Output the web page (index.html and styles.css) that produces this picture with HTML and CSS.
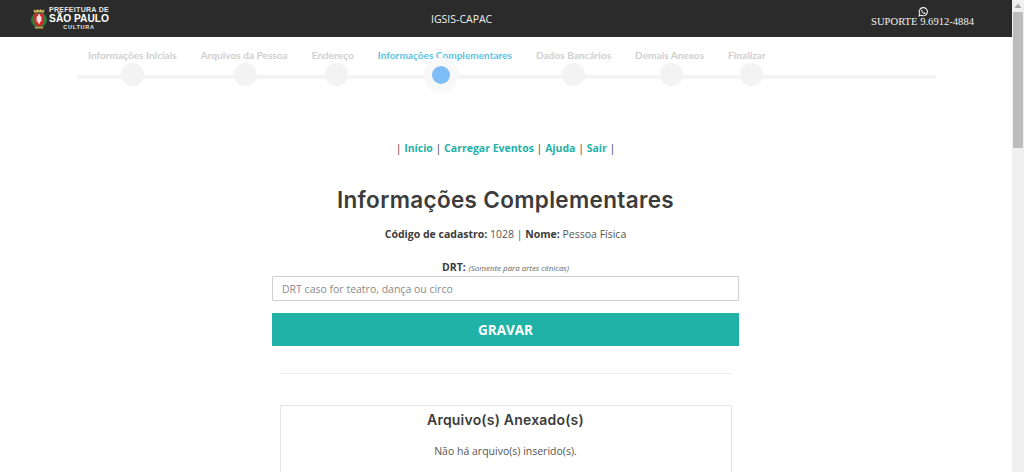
FILE: index.html
```html
<!DOCTYPE html>
<html lang="pt-BR">
<head>
<meta charset="utf-8">
<title>IGSIS-CAPAC</title>
<link rel="stylesheet" href="styles.css">
</head>
<body>
<div class="page">
  <div class="main">
    <header class="topbar">
      <div class="logo">
        <svg class="crest" width="16" height="21" viewBox="0 0 17 23" preserveAspectRatio="none">
          <path d="M3 5 L3 1.500 L5 3 L7 1 L8.500 3 L10 1 L12 3 L14 1.500 L14 5 Z" fill="#d8b65a"/>
          <ellipse cx="8.500" cy="13" rx="8.500" ry="8.500" fill="#2c7a3c"/>
          <path d="M3.500 6 H13.500 V14 Q13.500 19 8.500 20.500 Q3.500 19 3.500 14 Z" fill="#d62a2a"/>
          <rect x="6" y="9" width="5" height="6" fill="#f2e6e0"/>
          <rect x="7.500" y="7" width="2" height="10" fill="#f2e6e0"/>
          <rect x="4" y="20.500" width="9" height="2" fill="#b9a04c"/>
        </svg>
        <div class="logo-text">
          <span class="logo-top">PREFEITURA DE</span>
          <span class="logo-main">SÃO PAULO</span>
          <span class="logo-sub">CULTURA</span>
        </div>
      </div>
      <div class="app-title">IGSIS-CAPAC</div>
      <div class="support">
        <svg width="10" height="10" viewBox="0 0 24 24" fill="none" stroke="#f0f0f0" stroke-width="2.600">
          <path d="M2.500 21.500 L4.200 16 A9.800 9.800 0 1 1 8 19.800 Z"/>
          <path d="M8 7 C7.500 12 12 17 17 16.500 L18 14 L15 12.500 L13.800 14 C12 13.300 10.800 12 10.200 10.300 L11.500 9 L10.300 6.500 Z" fill="#f0f0f0" stroke="none"/>
        </svg>
        <span>SUPORTE 9.6912-4884</span>
      </div>
    </header>

    <nav class="steps">
      <div class="step"><span class="step-label">Informações Iniciais</span><span class="dot"></span></div>
      <div class="step"><span class="step-label">Arquivos da Pessoa</span><span class="dot dot-r1"></span></div>
      <div class="step"><span class="step-label">Endereço</span><span class="dot dot-r4"></span></div>
      <div class="step step-active"><span class="step-label">Informações Complementares</span><span class="dot"></span></div>
      <div class="step"><span class="step-label">Dados Bancários</span><span class="dot"></span></div>
      <div class="step"><span class="step-label">Demais Anexos</span><span class="dot dot-r2"></span></div>
      <div class="step"><span class="step-label">Finalizar</span><span class="dot dot-r5"></span></div>
    </nav>

    <main class="content">
      <p class="links">| <a href="#">Início</a> | <a href="#">Carregar Eventos</a> | <a href="#">Ajuda</a> | <a href="#">Sair</a> |</p>
      <h1 class="title">Informações Complementares</h1>
      <p class="meta"><strong>Código de cadastro:</strong> 1028 | <strong>Nome:</strong> Pessoa Física</p>
      <form class="form">
        <label class="field-label" for="drt"><strong>DRT:</strong> <em>(Somente para artes cênicas)</em></label>
        <input class="field" id="drt" type="text" placeholder="DRT caso for teatro, dança ou circo">
        <button class="submit" type="button">GRAVAR</button>
      </form>
      <hr class="rule">
      <section class="files">
        <h2 class="files-title">Arquivo(s) Anexado(s)</h2>
        <p class="files-empty">Não há arquivo(s) inserido(s).</p>
      </section>
    </main>
  </div>
  <div class="scrollbar">
    <svg class="arrow" width="12" height="12" viewBox="0 0 12 12"><path d="M6 3.500 L9.500 8 H2.500 Z" fill="#a8a8a8"/></svg>
    <div class="thumb"></div>
  </div>
</div>
</body>
</html>
```

FILE: styles.css
```css
* { box-sizing: border-box; }
html, body { margin: 0; height: 100%; overflow: hidden; }
body { background: #fff; color: #555; font-family: "Open Sans", sans-serif; font-size: 12px; }
.page { display: flex; height: 472px; overflow: hidden; }
.main { flex: 1; min-width: 0; }

.topbar { height: 37px; background: #2b2b2b; display: grid; grid-template-columns: 400px auto 1fr; align-items: center; padding: 0 38px 0 31px; color: #f0f0f0; }
.logo { display: flex; align-items: center; gap: 2px; }
.crest { flex: none; }
.logo-text { display: flex; flex-direction: column; align-items: center; font-family: "Liberation Sans", sans-serif; font-weight: 700; color: #e8e8e8; line-height: 1; }
.logo-top { font-size: 7px; letter-spacing: .3px; line-height: 8px; }
.logo-main { font-size: 10.200px; line-height: 10px; color: #fff; }
.logo-sub { font-size: 5.500px; letter-spacing: .8px; line-height: 7px; }
.app-title { font-family: "Open Sans", sans-serif; font-size: 10.500px; color: #f0f0f0; }
.support { justify-self: end; align-self: start; padding-top: 7px; display: flex; flex-direction: column; align-items: center; font-family: "Liberation Serif", serif; font-size: 10.600px; line-height: 10px; }
.support svg { display: block; }

.steps { position: relative; display: flex; margin: 12px 76px 0 77px; height: 41px; }
.steps::after { content: ""; position: absolute; left: 0; right: 0; top: 26px; height: 4px; background: #f4f4f4; }
.step { position: relative; z-index: 1; display: flex; flex-direction: column; align-items: center; padding: 0 12px; }
.step:first-child { padding-left: 11px; }
.step-label { font-family: Lato, sans-serif; font-weight: 700; font-size: 10.100px; line-height: 12px; color: #cfcfcf; white-space: nowrap; }
.dot { width: 23px; height: 23px; border-radius: 50%; background: #f3f3f3; margin-top: 2px; }
.dot-r1 { margin-left: 2px; }
.dot-r2 { margin-left: 4px; }
.dot-r4 { margin-left: 8px; }
.dot-r5 { margin-left: 10px; }
.step-active .step-label { color: #5cc3e4; }
.step-active .dot { background: #7fbdf8; width: 18px; height: 18px; margin-top: 5px; margin-right: 7px; box-shadow: 0 0 0 8.500px #f8f8f8; }

.content { width: 467px; margin-left: 272px; display: flex; flex-direction: column; align-items: center; }
.links { margin: 50px 0 0; font-size: 10.500px; line-height: 16px; color: #444; font-weight: 400; }
.links a { color: #1fb1a7; font-weight: 700; text-decoration: none; }
.title { margin: 29px 0 0; font-family: Inter, sans-serif; font-size: 22.500px; line-height: 30px; font-weight: 600; letter-spacing: .33px; color: #3c3c3c; white-space: nowrap; }
.meta { margin: 11px 0 0; font-size: 10.500px; line-height: 16px; color: #555; }
.meta strong { color: #3c3c3c; }
.form { width: 100%; margin-top: 17px; display: flex; flex-direction: column; align-items: center; }
.field-label { font-size: 10.500px; line-height: 16px; color: #3c3c3c; height: 17px; }
.field-label em { font-size: 7.900px; color: #666; }
.field { width: 100%; height: 25px; border: 1px solid #cfcfcf; border-radius: 1px; padding: 0 9px; font-family: "Open Sans", sans-serif; font-size: 10.500px; color: #555; background: #fff; outline: none; }
.field::placeholder { color: #8a8a8a; opacity: 1; }
.submit { width: 100%; height: 33px; margin-top: 12px; border: 0; background: #20b2a7; color: #fff; font-family: "Open Sans", sans-serif; font-size: 13.500px; font-weight: 700; }
.rule { width: 452px; margin: 27px 0 0; border: 0; border-top: 1px solid #ededed; }
.files { width: 452px; height: 120px; margin-top: 31px; border: 1px solid #e6e6e6; text-align: center; flex: none; }
.files-title { margin: 5px 0 0; font-family: Inter, sans-serif; font-size: 14px; line-height: 18px; font-weight: 600; letter-spacing: .2px; color: #3c3c3c; }
.files-empty { margin: 14px 0 0; font-size: 10.500px; line-height: 16px; color: #555; }

.scrollbar { flex: none; width: 12px; background: #f0f0f0; display: flex; flex-direction: column; align-items: center; }
.arrow { display: block; flex: none; }
.thumb { width: 10px; height: 136px; background: #bcbcbc; }
```
